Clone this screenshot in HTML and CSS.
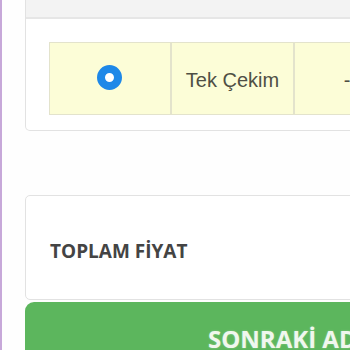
FILE: index.html
```html
<!DOCTYPE html>
<html lang="tr">
<head>
    <meta charset="UTF-8">
    <meta name="viewport" content="width=device-width, initial-scale=1.0">
    <title>Ödeme</title>
    <link rel="stylesheet" href="styles.css">
</head>
<body>
    <main class="page">
        <section class="card">
            <div class="card-head"></div>
            <div class="card-body">
                <div class="taksit-table">
                    <div class="cell">
                        <span class="radio"></span>
                    </div>
                    <div class="cell">Tek Çekim</div>
                    <div class="cell">-</div>
                </div>
            </div>
        </section>

        <section class="card total">
            <p class="total-title">TOPLAM FİYAT</p>
        </section>

        <button class="next-btn">SONRAKİ ADIM</button>
    </main>
</body>
</html>
```

FILE: styles.css
```css
* {
    margin: 0;
    padding: 0;
    box-sizing: border-box;
    font-family: "Open Sans", Arial, sans-serif;
}
html, body {
    width: 350px;
    height: 350px;
    overflow: hidden;
}
body {
    background: #fefefe;
    border-left: 2px solid #c7a8d9;
}
.page {
    width: 600px;
    padding-left: 23px;
}
.card {
    background: #fff;
    border: 1px solid #e2e2e2;
    border-radius: 5px;
}
.card:first-child {
    border-top: none;
    border-radius: 0 0 5px 5px;
}
.card-head {
    height: 19px;
    background: #f3f3f3;
    border-bottom: 2px solid #e6e6e6;
}
.card-body {
    padding: 23px 0 15px 23px;
}

/* Taksit tablosu */
.taksit-table {
    display: grid;
    grid-template-columns: 122px 123px 106px 123px;
    height: 73px;
    background: #fcfdd7;
    border: 1px solid #e3e3cc;
}
.cell {
    display: flex;
    justify-content: center;
    align-items: center;
    border-right: 2px solid #e3e3cc;
    color: #4f4f44;
    font-family: "Liberation Sans", Arial, sans-serif;
    font-size: 20px;
    padding-top: 3px;
}
.radio {
    width: 25px;
    height: 25px;
    margin-top: -6px;
    margin-left: -1px;
    border-radius: 50%;
    border: 8.5px solid #1e88e8;
    background: #fff;
}

/* Toplam */
.total {
    margin-top: 64px;
    height: 105px;
    display: flex;
    align-items: center;
    padding: 6px 0 0 24px;
}
.total-title {
    font-size: 19px;
    font-weight: 700;
    color: #444;
}

.next-btn {
    display: block;
    width: 100%;
    margin-top: 2px;
    height: 72px;
    border: none;
    border-radius: 9px 9px 0 0;
    background: #5cb65d;
    color: #f0f7ee;
    font-size: 24px;
    font-weight: 700;
    text-align: left;
    padding: 0 0 0 183px;
    text-shadow: 0 0 2px #8fcf8f;
}
```
